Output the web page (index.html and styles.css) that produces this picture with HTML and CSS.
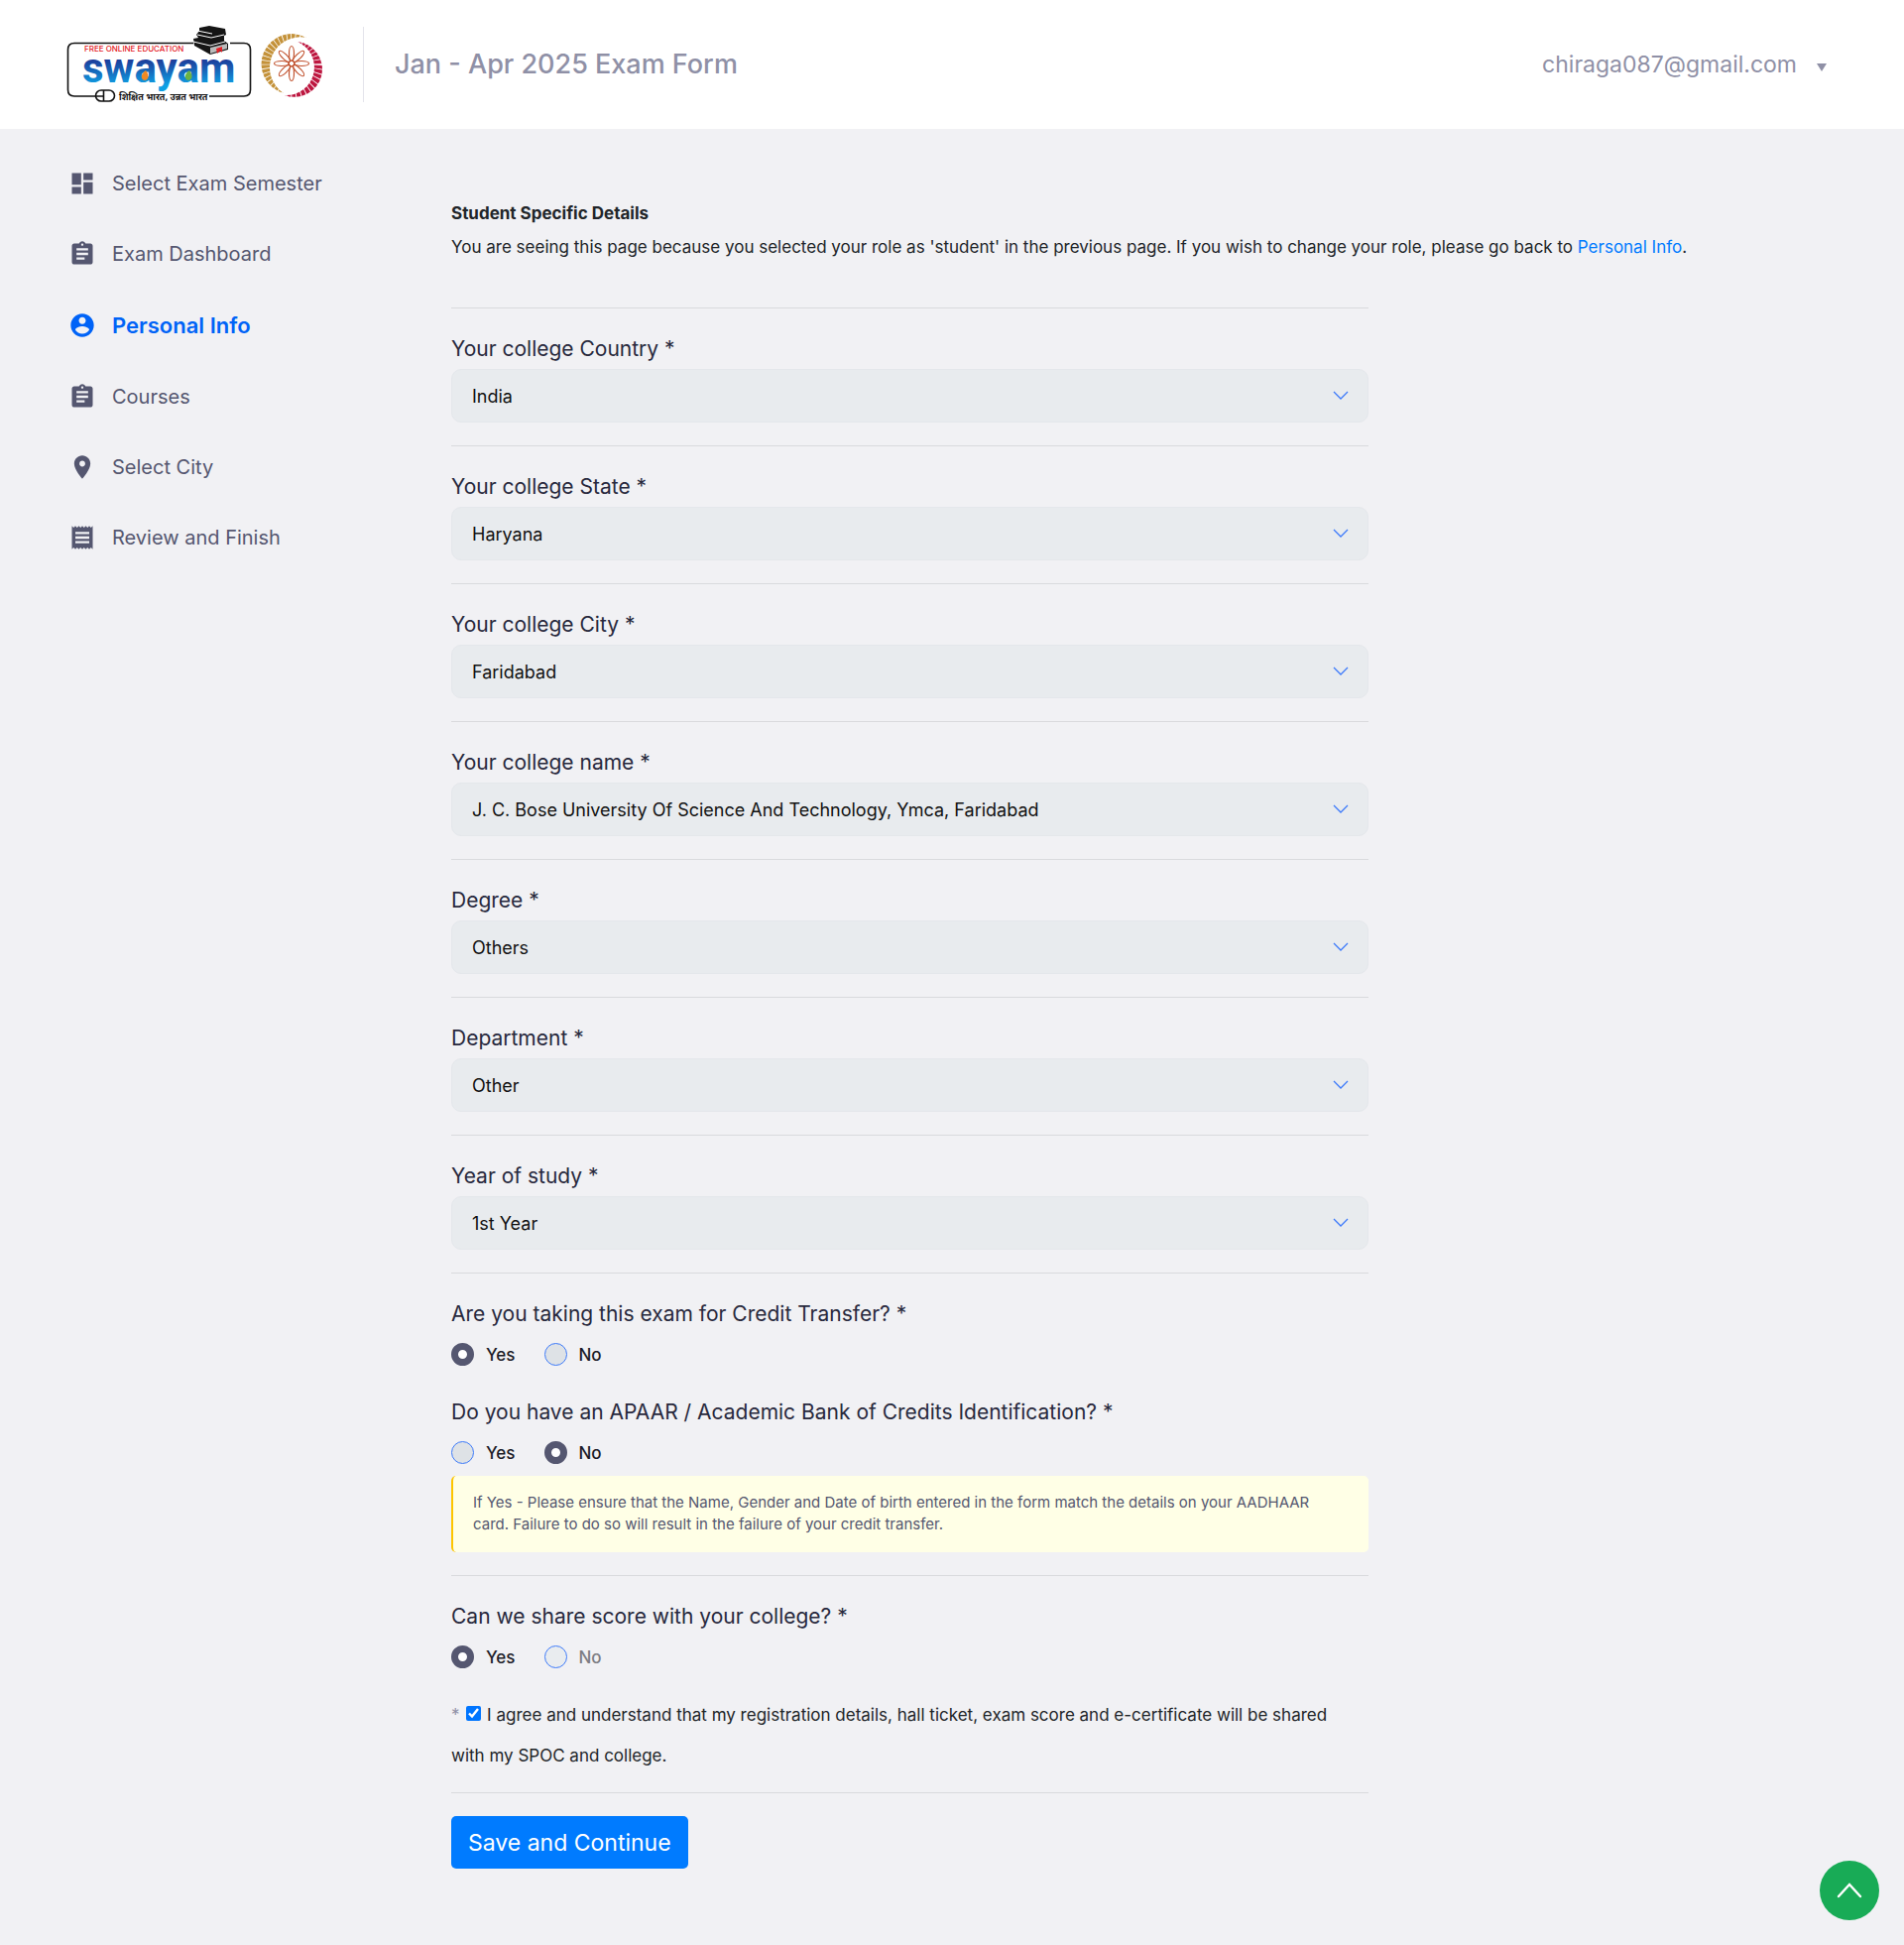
FILE: index.html
```html
<!DOCTYPE html>
<html lang="en">
<head>
<meta charset="utf-8">
<meta name="viewport" content="width=device-width, initial-scale=1">
<title>Jan - Apr 2025 Exam Form</title>
<link rel="stylesheet" href="styles.css">
</head>
<body>
<header class="header">
  <a class="logo" href="#" aria-label="Swayam home">
    <svg width="264" height="84" viewBox="0 0 264 84">
      <defs>
        <linearGradient id="blue" x1="0" y1="0" x2="0" y2="1">
          <stop offset="0.35" stop-color="#1c3f9c"/>
          <stop offset="0.85" stop-color="#0fa0e4"/>
        </linearGradient>
      </defs>
      <g fill="none" stroke="#111" stroke-width="1.6">
        <path d="M129 20.500H9Q2.500 20.500 2.500 27V67.500Q2.500 74 9 74H30M145 74H180Q186.500 74 186.500 67.500V27Q186.500 20.500 180 20.500H166"/>
        <rect x="30.500" y="68" width="19" height="11" rx="5.500"/>
        <path d="M38.500 68v11M30.500 74h8"/>
      </g>
      <text class="logo-tag" x="19" y="29" fill="#e42127">FREE ONLINE EDUCATION</text>
      <text class="logo-name" x="17" y="60" fill="url(#blue)">swayam</text>
      <text class="logo-hindi" x="54" y="78" fill="#111">शिक्षित भारत, उन्नत भारत</text>
      <path d="M80 58c-5-1-4-7 1-10 3 4 4 9-1 10z" fill="#f08a24"/>
      <path d="M124 58c-5-1-4-7 1-10 3 4 4 9-1 10z" fill="#6ab344"/>
      <path fill="#151515" d="M135 5l10-2 16 3 1 6-2 1v5l4 3v6l-18 5-16-9-1-7 5-1-2-3 3-4z"/>
      <path d="M133 8l15 3M133 12l14 3 13-3M129 19l17 4 15-4" fill="none" stroke="#fff" stroke-width="1"/>
      <path d="M146 25l17-4v5l-17 5z" fill="#bbb"/>
      <path d="M152 26l6-2v6l-2-2-3 3z" fill="#e42127"/>
      <path d="M243 15A30.500 30.500 0 1 0 220 71A30.800 30.800 0 0 1 243 15z" fill="#c4923a"/>
      <path d="M234 19A28 28 0 1 1 221 73A28.200 28.200 0 0 0 234 19z" fill="#bd1740"/>
      <circle cx="228" cy="42" r="27" fill="none" stroke="#fff" stroke-width="14" stroke-dasharray="0.800 3.400"/>
      <g fill="none" stroke="#c0502c" stroke-width="1.200" transform="translate(228 41)">
        <g id="petals"><ellipse cy="-10" rx="2.500" ry="7.500"/><ellipse cy="10" rx="2.500" ry="7.500"/><ellipse cx="-10" rx="7.500" ry="2.500"/><ellipse cx="10" rx="7.500" ry="2.500"/></g>
        <use href="#petals" transform="rotate(45)"/>
        <circle r="3"/>
      </g>
    </svg>
  </a>
  <h1 class="title">Jan - Apr 2025 Exam Form</h1>
  <button class="account" type="button">chiraga087@gmail.com <span class="caret"></span></button>
</header>

<div class="layout">
  <nav class="sidebar" aria-label="Exam form steps">
    <a class="step" href="#"><svg class="icon" viewBox="0 0 24 24"><path d="M3 13h8V3H3v10zm0 8h8v-6H3v6zm10 0h8V11h-8v10zm0-18v6h8V3h-8z"/></svg>Select Exam Semester</a>
    <a class="step" href="#"><svg class="icon" viewBox="0 0 24 24"><path d="M19 3h-4.180C14.400 1.840 13.300 1 12 1c-1.300 0-2.400.84-2.820 2H5c-1.100 0-2 .9-2 2v14c0 1.100.9 2 2 2h14c1.100 0 2-.9 2-2V5c0-1.100-.9-2-2-2zm-7 0c.55 0 1 .45 1 1s-.45 1-1 1-1-.45-1-1 .45-1 1-1zm2 14H7v-2h7v2zm3-4H7v-2h10v2zm0-4H7V7h10v2z"/></svg>Exam Dashboard</a>
    <a class="step active" href="#"><svg class="icon" viewBox="0 0 24 24"><path d="M12 2C6.480 2 2 6.480 2 12s4.480 10 10 10 10-4.480 10-10S17.520 2 12 2zm0 3c1.660 0 3 1.340 3 3s-1.340 3-3 3-3-1.340-3-3 1.340-3 3-3zm0 14.200c-2.500 0-4.710-1.280-6-3.220.03-1.990 4-3.080 6-3.080 1.990 0 5.970 1.090 6 3.080-1.290 1.940-3.500 3.220-6 3.220z"/></svg>Personal Info</a>
    <a class="step" href="#"><svg class="icon" viewBox="0 0 24 24"><path d="M19 3h-4.180C14.400 1.840 13.300 1 12 1c-1.300 0-2.400.84-2.820 2H5c-1.100 0-2 .9-2 2v14c0 1.100.9 2 2 2h14c1.100 0 2-.9 2-2V5c0-1.100-.9-2-2-2zm-7 0c.55 0 1 .45 1 1s-.45 1-1 1-1-.45-1-1 .45-1 1-1zm2 14H7v-2h7v2zm3-4H7v-2h10v2zm0-4H7V7h10v2z"/></svg>Courses</a>
    <a class="step" href="#"><svg class="icon" viewBox="0 0 24 24"><path d="M12 2C8.130 2 5 5.130 5 9c0 5.250 7 13 7 13s7-7.750 7-13c0-3.870-3.130-7-7-7zm0 9.500c-1.380 0-2.500-1.120-2.500-2.500s1.120-2.500 2.500-2.500 2.500 1.120 2.500 2.500-1.120 2.500-2.500 2.500z"/></svg>Select City</a>
    <a class="step" href="#"><svg class="icon" viewBox="0 0 24 24"><path d="M18 17H6v-2h12v2zm0-4H6v-2h12v2zm0-4H6V7h12v2zM3 22l1.500-1.500L6 22l1.500-1.500L9 22l1.500-1.500L12 22l1.500-1.500L15 22l1.500-1.500L18 22l1.500-1.500L21 22V2l-1.500 1.500L18 2l-1.500 1.500L15 2l-1.500 1.500L12 2l-1.500 1.500L9 2 7.500 3.500 6 2 4.500 3.500 3 2v20z"/></svg>Review and Finish</a>
  </nav>

  <main class="main">
    <h2 class="heading">Student Specific Details</h2>
    <p class="intro">You are seeing this page because you selected your role as 'student' in the previous page. If you wish to change your role, please go back to <a href="#">Personal Info</a>.</p>

    <form class="form">
      <div class="section">
        <label class="label" for="country">Your college Country *</label>
        <select class="select" id="country"><option>India</option></select>
      </div>
      <div class="section">
        <label class="label" for="state">Your college State *</label>
        <select class="select" id="state"><option>Haryana</option></select>
      </div>
      <div class="section">
        <label class="label" for="city">Your college City *</label>
        <select class="select" id="city"><option>Faridabad</option></select>
      </div>
      <div class="section">
        <label class="label" for="college">Your college name *</label>
        <select class="select" id="college"><option>J. C. Bose University Of Science And Technology, Ymca, Faridabad</option></select>
      </div>
      <div class="section">
        <label class="label" for="degree">Degree *</label>
        <select class="select" id="degree"><option>Others</option></select>
      </div>
      <div class="section">
        <label class="label" for="department">Department *</label>
        <select class="select" id="department"><option>Other</option></select>
      </div>
      <div class="section">
        <label class="label" for="year">Year of study *</label>
        <select class="select" id="year"><option>1st Year</option></select>
      </div>

      <div class="section">
        <fieldset class="question">
          <legend class="label">Are you taking this exam for Credit Transfer? *</legend>
          <div class="choices">
            <label class="choice"><input class="radio" type="radio" name="credit" checked>Yes</label>
            <label class="choice"><input class="radio" type="radio" name="credit">No</label>
          </div>
        </fieldset>
        <fieldset class="question follow-up">
          <legend class="label">Do you have an APAAR / Academic Bank of Credits Identification? *</legend>
          <div class="choices">
            <label class="choice"><input class="radio" type="radio" name="apaar">Yes</label>
            <label class="choice"><input class="radio" type="radio" name="apaar" checked>No</label>
          </div>
        </fieldset>
        <p class="notice">If Yes - Please ensure that the Name, Gender and Date of birth entered in the form match the details on your AADHAAR card. Failure to do so will result in the failure of your credit transfer.</p>
      </div>

      <div class="section consent">
        <fieldset class="question">
          <legend class="label">Can we share score with your college? *</legend>
          <div class="choices">
            <label class="choice"><input class="radio" type="radio" name="share" checked>Yes</label>
            <label class="choice muted"><input class="radio" type="radio" name="share" disabled>No</label>
          </div>
        </fieldset>
        <p class="agree"><span class="star">*</span> <input class="check" type="checkbox" id="agree" checked> <label for="agree">I agree and understand that my registration details, hall ticket, exam score and e-certificate will be shared with my SPOC and college.</label></p>
      </div>

      <div class="actions">
        <button class="save" type="submit">Save and Continue</button>
      </div>
    </form>
  </main>
</div>

<button class="to-top" type="button" aria-label="Back to top">
  <svg width="26" height="16" viewBox="0 0 26 16"><path d="M2 14L13 2l11 12" fill="none" stroke="#fff" stroke-width="2.400" stroke-linecap="round"/></svg>
</button>
</body>
</html>
```
FILE: styles.css
```css
* { box-sizing: border-box; }

body {
  margin: 0;
  background: #f1f1f4;
  color: #212529;
  font-family: Inter, "Liberation Sans", sans-serif;
  font-size: 17px;
}

h1, h2, p { margin: 0; }

a { color: #007bff; text-decoration: none; }

button, select, input { font-family: inherit; }

.header {
  display: flex;
  align-items: center;
  height: 130px;
  padding: 0 78px 0 66px;
  background: #fff;
  color: #8f90a6;
}

.logo { display: flex; width: 300px; }
.logo-tag { font: 500 8px Inter, sans-serif; }
.logo-name { font: bold 42px Roboto, "Open Sans", sans-serif; }
.logo-hindi { font: bold 9px "Noto Sans Devanagari", "Noto Sans", sans-serif; }

.title {
  flex: 1;
  height: 76px;
  padding-left: 31px;
  border-left: 1px solid #e4e4eb;
  font-size: 27px;
  font-weight: 500;
  line-height: 76px;
}

.account {
  display: flex;
  align-items: center;
  gap: 20px;
  padding: 0;
  border: 0;
  background: none;
  color: inherit;
  font-size: 23px;
  line-height: 32px;
}

.caret {
  margin-top: 5px;
  border: 5px solid transparent;
  border-top: 8px solid #8f90a6;
  border-bottom: 0;
}

.layout {
  display: flex;
  padding: 19px 77px 77px 69px;
}

.sidebar {
  display: flex;
  flex: 0 0 386px;
  flex-direction: column;
}

.step {
  display: flex;
  align-items: center;
  gap: 16px;
  height: 71px;
  color: #555770;
  font-size: 20px;
}

.step.active {
  height: 73px;
  color: #0063f7;
  font-size: 22px;
  font-weight: 600;
}

.icon { width: 28px; height: 28px; fill: currentColor; }

.main { flex: 1; padding-top: 50px; }

.heading { font-size: 17px; font-weight: 700; line-height: 32px; }
.intro { line-height: 36px; padding-bottom: 43px; }

.form { width: 66.666%; }

.section {
  padding: 22px 0 23px;
  border-top: 1px solid #d9dadd;
}

.label {
  display: block;
  padding: 0;
  color: #28293d;
  font-size: 21px;
  line-height: 37px;
}

.select {
  display: block;
  width: 100%;
  height: 54px;
  margin: 2px 0 0;
  padding: 0 48px 0 20px;
  border: 1px solid #e4e7eb;
  border-radius: 10px;
  appearance: none;
  background: #e8ebee url("data:image/svg+xml,%3Csvg xmlns='http://www.w3.org/2000/svg' width='16' height='10'%3E%3Cpath d='M1 1l7 7 7-7' fill='none' stroke='%233e7bfa' stroke-width='1.300'/%3E%3C/svg%3E") no-repeat right 19px center;
  color: #111;
  font-size: 18px;
}

.question { margin: 0; padding: 1px 0 0; border: 0; }
.follow-up { margin-top: 16px; }

.choices { display: flex; gap: 29px; padding: 10px 0 12px; }

.choice {
  display: flex;
  align-items: center;
  gap: 12px;
  height: 23px;
  color: #1c1c28;
  font-size: 17px;
  font-weight: 500;
}

.muted { color: #7c7d83; }

.radio {
  width: 23px;
  height: 23px;
  margin: 0;
  border: 1px solid #3e7bfa;
  border-radius: 50%;
  appearance: none;
  background: #dee2e6;
}

.radio:checked { border: 7px solid #555770; background: #fff; }
.radio:disabled { background: #e9ecef; }

.notice {
  padding: 16px 50px 17px 20px;
  border-left: 2px solid #fdc500;
  border-radius: 5px;
  background: #ffffe6;
  color: #555770;
  font-size: 15px;
  line-height: 22px;
}

.consent { padding-bottom: 16px; }
.agree { padding: 15px 16px 0 0; line-height: 41px; }
.star { color: #8f90a6; }
.check { width: 15px; height: 15px; margin: 0 1px 0 2px; accent-color: #0075ff; }

.actions { padding-top: 23px; border-top: 1px solid #d9dadd; }

.save {
  height: 53px;
  padding: 0 17px;
  border: 0;
  border-radius: 5px;
  background: #007bff;
  color: #fff;
  font-size: 23px;
}

.to-top {
  position: fixed;
  right: 25px;
  bottom: 25px;
  display: grid;
  place-items: center;
  width: 60px;
  height: 60px;
  padding: 0;
  border: 0;
  border-radius: 50%;
  background: #18ab56;
}
```
